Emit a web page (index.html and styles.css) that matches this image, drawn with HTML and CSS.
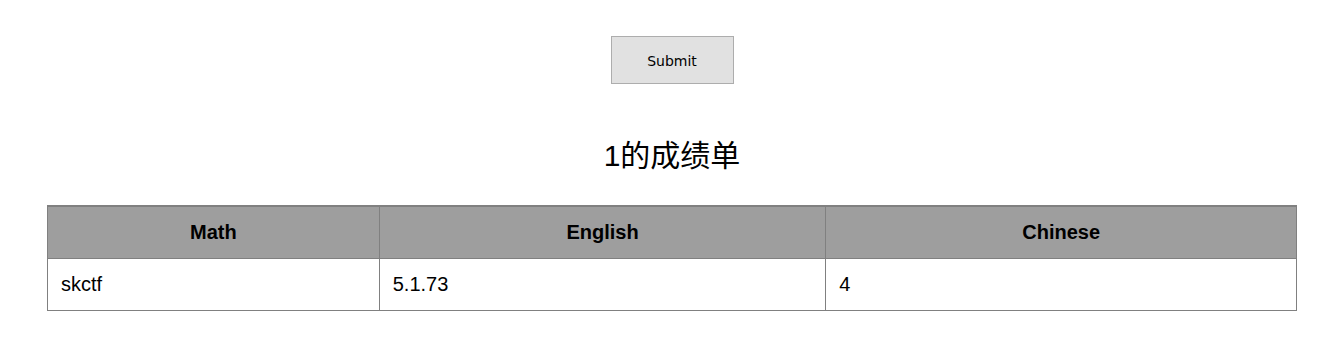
FILE: index.html
```html
<!DOCTYPE html>
<html lang="zh-CN">
<head>
    <meta charset="UTF-8">
    <meta name="viewport" content="width=device-width, initial-scale=1.0">
    <title>成绩单</title>
    <link rel="stylesheet" href="styles.css">
</head>
<body>
    <div class="page">
        <form class="query" onsubmit="return false;">
            <button type="submit">Submit</button>
        </form>

        <h2>1的成绩单</h2>
        <table class="scores">
            <thead>
                <tr>
                    <th class="col-math">Math</th>
                    <th class="col-english">English</th>
                    <th class="col-chinese">Chinese</th>
                </tr>
            </thead>
            <tbody>
                <tr>
                    <td>skctf</td>
                    <td>5.1.73</td>
                    <td>4</td>
                </tr>
            </tbody>
        </table>
    </div>
</body>
</html>
```

FILE: styles.css
```css
body {
    margin: 0;
    padding: 8px;
    background: #fff;
    font-family: 'Liberation Sans', Arial, sans-serif;
    color: #000;
}

.page {
    padding-left: 23px;
}

.query {
    display: flex;
    justify-content: center;
    padding-top: 28px;
}

.query button {
    width: 123px;
    height: 48px;
    padding-top: 2px;
    background: #e1e1e1;
    border: 1px solid #adadad;
    font-family: 'DejaVu Sans', Tahoma, sans-serif;
    font-size: 14px;
    color: #000;
    cursor: pointer;
}

h2 {
    margin: 54px 0 0;
    font-size: 30px;
    font-weight: normal;
    line-height: 36px;
    text-align: center;
    font-family: 'Liberation Sans', 'Noto Sans CJK SC', sans-serif;
}

.scores {
    width: 1250px;
    margin: 31px auto 0;
    border-collapse: collapse;
    font-size: 20px;
}

.scores th,
.scores td {
    border: 1px solid #808080;
    padding: 14px 13px;
    line-height: 23px;
    text-align: left;
}

.scores thead tr {
    border-top: 2px solid #808080;
}

.scores th {
    background: #9e9e9e;
    font-weight: bold;
    text-align: center;
}

.col-math { width: 305px; }
.col-english { width: 420px; }
.col-chinese { width: 444px; }
```
